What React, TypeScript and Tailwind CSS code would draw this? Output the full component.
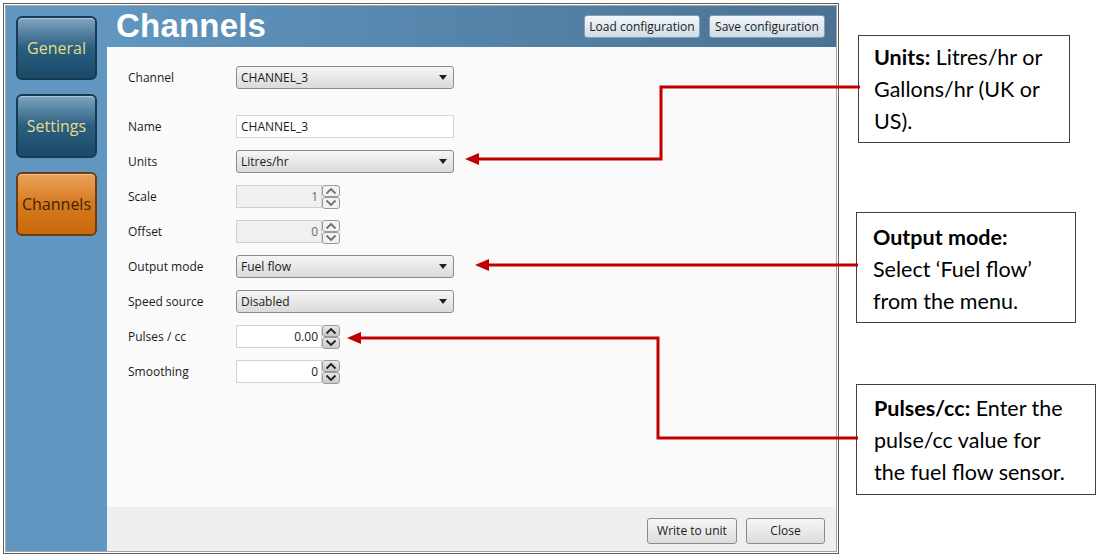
import { ReactNode } from "react";

const ui = { fontFamily: '"Open Sans", "Noto Sans", sans-serif' };
const note = { fontFamily: 'Lato, "Open Sans", sans-serif' };

function SideButton({ label, active }: { label: string; active?: boolean }) {
  const cls = active
    ? "bg-gradient-to-b from-[#eaa25a] via-[#d7791c] to-[#c86a0c] border-[#6b3d10] text-[#3b2508]"
    : "bg-gradient-to-b from-[#7ea5c1] via-[#2a5f80] to-[#1c4a68] border-[#163a52] text-[#e6dc88]";
  return (
    <div
      className={`w-[81px] h-[64px] rounded-[6px] border-2 flex items-center justify-center text-[16px] shadow-[inset_0_1px_0_rgba(255,255,255,0.4)] ${cls}`}
    >
      {label}
    </div>
  );
}

function HeaderButton({ children, w }: { children: ReactNode; w: string }) {
  return (
    <div
      className={`${w} h-[23px] rounded-[3px] border border-[#8a9cad] bg-gradient-to-b from-[#f2f6fa] to-[#cfdce8] text-[12px] text-[#1a1a1a] flex items-center justify-center`}
    >
      {children}
    </div>
  );
}

function Caret() {
  return (
    <svg width="8" height="5" viewBox="0 0 8 5" className="mr-[6px]">
      <path d="M0 0H8L4 5Z" fill="#202020" />
    </svg>
  );
}

function Select({ value }: { value: string }) {
  return (
    <div className="w-[218px] h-[23px] rounded-[3px] border border-[#8b8b8b] bg-gradient-to-b from-[#f6f6f6] to-[#dadada] flex items-center justify-between pl-[4px] text-[12px] text-[#1a1a1a]">
      <span>{value}</span>
      <Caret />
    </div>
  );
}

function Chevron({ up, dark }: { up?: boolean; dark?: boolean }) {
  return (
    <div
      className={`w-[18px] h-[12px] rounded-[3px] border border-[#9a9a9a] flex items-center justify-center ${dark ? "bg-gradient-to-b from-[#e8e8e8] to-[#c8c8c8]" : "bg-[#f2f2f2]"}`}
    >
      <svg width="12" height="8" viewBox="0 0 12 8">
        <path
          d={up ? "M1.5 6.5L6 2L10.5 6.5" : "M1.5 1.5L6 6L10.5 1.5"}
          fill="none"
          stroke={dark ? "#202020" : "#707070"}
          strokeWidth="1.8"
        />
      </svg>
    </div>
  );
}

function Spin({ value, disabled }: { value: string; disabled?: boolean }) {
  return (
    <div className="flex items-center">
      <div
        className={`w-[86px] h-[23px] border flex items-center justify-end pr-[3px] text-[12px] ${disabled ? "bg-[#f0f0f0] border-[#cfcfcf] text-[#6a6a6a]" : "bg-white border-[#d2d2d2] text-[#1a1a1a]"}`}
      >
        {value}
      </div>
      <div className="flex flex-col">
        <Chevron up dark={!disabled} />
        <Chevron dark={!disabled} />
      </div>
    </div>
  );
}

function Row({ label, children }: { label: string; children: ReactNode }) {
  return (
    <div className="flex items-center h-[23px]">
      <div className="w-[108px] text-[12px] text-[#1a1a1a]">{label}</div>
      {children}
    </div>
  );
}

function Callout({ className, lines }: { className: string; lines: ReactNode[] }) {
  return (
    <div className={`border border-[#404040] bg-white text-[21.5px] leading-[32px] text-black ${className}`} style={note}>
      {lines.map((l, i) => (
        <div key={i} className="whitespace-nowrap">
          {l}
        </div>
      ))}
    </div>
  );
}

export default function App() {
  return (
    <div className="relative w-[1100px] h-[560px] bg-white flex overflow-hidden">
      <div className="ml-[3px] mt-[3px] w-[836px] h-[551px] border border-[#5e5e5e] p-px bg-white" style={ui}>
        <div className="w-full h-full border border-[#a4a4a4] flex bg-[#6096c0]">
          <div className="w-[101px] flex flex-col gap-[14px] pt-[10px] pl-[10px]">
            <SideButton label="General" />
            <SideButton label="Settings" />
            <SideButton label="Channels" active />
          </div>
          <div className="flex-1 flex flex-col">
            <div className="h-[41px] bg-gradient-to-r from-[#6096c0] to-[#4a7294] flex items-start justify-between pl-[9px] pr-[11px]">
              <div
                className="text-white font-bold text-[33px] leading-[40px] tracking-[0.2px]"
                style={{ fontFamily: '"Liberation Sans", Arial, sans-serif' }}
              >
                Channels
              </div>
              <div className="flex gap-[9px] mt-[9px]">
                <HeaderButton w="w-[116px]">Load configuration</HeaderButton>
                <HeaderButton w="w-[116px]">Save configuration</HeaderButton>
              </div>
            </div>
            <div className="flex-1 bg-[#fafafa] pl-[21px] pt-[19px] flex flex-col">
              <Row label="Channel">
                <Select value="CHANNEL_3" />
              </Row>
              <div className="flex flex-col gap-[12px] mt-[26px]">
                <Row label="Name">
                  <div className="w-[218px] h-[23px] border border-[#d6d6d6] bg-white flex items-center pl-[4px] text-[12px] text-[#1a1a1a]">
                    CHANNEL_3
                  </div>
                </Row>
                <Row label="Units">
                  <Select value="Litres/hr" />
                </Row>
                <Row label="Scale">
                  <Spin value="1" disabled />
                </Row>
                <Row label="Offset">
                  <Spin value="0" disabled />
                </Row>
                <Row label="Output mode">
                  <Select value="Fuel flow" />
                </Row>
                <Row label="Speed source">
                  <Select value="Disabled" />
                </Row>
                <Row label="Pulses / cc">
                  <Spin value="0.00" />
                </Row>
                <Row label="Smoothing">
                  <Spin value="0" />
                </Row>
              </div>
            </div>
            <div className="h-[44px] bg-[#efefef] flex items-center justify-end gap-[9px] pr-[11px] pt-[4px]">
              <div className="w-[90px] h-[26px] rounded-[3px] border border-[#8a8a8a] bg-gradient-to-b from-[#f7f7f7] to-[#dcdcdc] text-[12px] text-[#1a1a1a] flex items-center justify-center">
                Write to unit
              </div>
              <div className="w-[79px] h-[26px] rounded-[3px] border border-[#8a8a8a] bg-gradient-to-b from-[#f7f7f7] to-[#dcdcdc] text-[12px] text-[#1a1a1a] flex items-center justify-center">
                Close
              </div>
            </div>
          </div>
        </div>
      </div>

      <div className="flex flex-col ml-[19px]">
        <Callout
          className="mt-[35px] w-[212px] h-[108px] pl-[15px] pt-[5px]"
          lines={[
            <>
              <b>Units:</b> Litres/hr or
            </>,
            "Gallons/hr (UK or",
            "US).",
          ]}
        />
        <Callout
          className="mt-[69px] -ml-[2px] w-[220px] h-[111px] pl-[16px] pt-[8px]"
          lines={[<b>Output mode:</b>, "Select ‘Fuel flow’", "from the menu."]}
        />
        <Callout
          className="mt-[61px] -ml-[2px] w-[240px] h-[111px] pl-[17px] pt-[7px]"
          lines={[
            <>
              <b>Pulses/cc:</b> Enter the
            </>,
            "pulse/cc value for",
            "the fuel flow sensor.",
          ]}
        />
      </div>

      <svg className="absolute inset-0 pointer-events-none" width="1100" height="560">
        <g fill="none" stroke="#c00000" strokeWidth="3">
          <polyline points="860,87 661,87 661,159 476,159" />
          <polyline points="858,265 486,265" />
          <polyline points="858,438 658,438 658,338 358,338" />
        </g>
        <g fill="#c00000">
          <path d="M465 159L479 153V165Z" />
          <path d="M475 265L489 259V271Z" />
          <path d="M347 338L361 332V344Z" />
        </g>
      </svg>
    </div>
  );
}
